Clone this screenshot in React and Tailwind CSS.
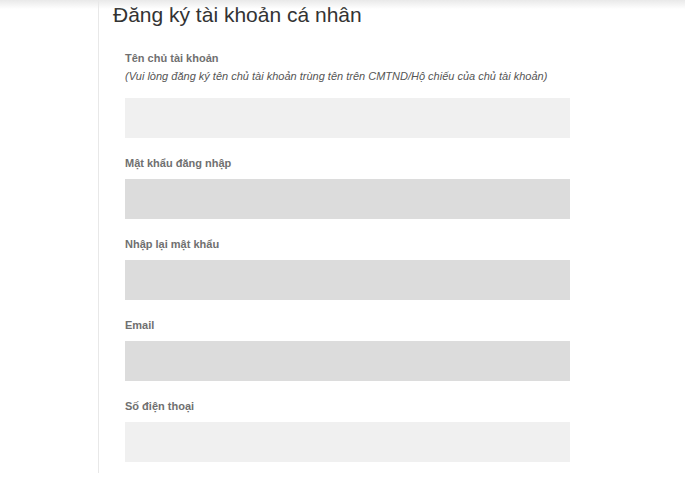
import React from "react";

const fields = [
  { label: "Tên chủ tài khoản", bg: "bg-[#f0f0f0]", first: true },
  { label: "Mật khẩu đăng nhập", bg: "bg-[#dcdcdc]" },
  { label: "Nhập lại mật khẩu", bg: "bg-[#dcdcdc]" },
  { label: "Email", bg: "bg-[#dcdcdc]" },
  { label: "Số điện thoại", bg: "bg-[#f0f0f0]" },
];

export default function App() {
  return (
    <div
      className="relative w-[685px] h-[497px] bg-white overflow-hidden"
      style={{ fontFamily: '"Liberation Sans", Arial, sans-serif' }}
    >
      <div className="ml-[98px] h-[473px] border-l border-[#e8e8e8] pl-[14px]">
        <h1 className="pt-[1px] text-[21px] leading-[28px] text-[#333] font-normal">
          Đăng ký tài khoản cá nhân
        </h1>
        <div className="pl-[12px] w-[457px] pt-[4px]">
          {fields.map((f) =>
            f.first ? (
              <div key={f.label}>
                <div className="mt-[16px] text-[11px] leading-[18px] font-bold text-[#707070]">
                  {f.label}
                </div>
                <div className="text-[11px] leading-[18px] italic text-[#555]">
                  (Vui lòng đăng ký tên chủ tài khoản trùng tên trên CMTND/Hộ chiếu của chủ tài khoản)
                </div>
                <div className={`mt-[13px] h-[40px] w-[445px] ${f.bg}`} />
              </div>
            ) : (
              <div key={f.label}>
                <div className="mt-[16px] mb-[7px] text-[11px] leading-[18px] font-bold text-[#707070]">
                  {f.label}
                </div>
                <div className={`h-[40px] w-[445px] ${f.bg}`} />
              </div>
            )
          )}
        </div>
      </div>
      <div className="absolute top-0 left-0 right-0 h-[9px] bg-gradient-to-b from-[#e9e9e9] to-transparent pointer-events-none" />
    </div>
  );
}
